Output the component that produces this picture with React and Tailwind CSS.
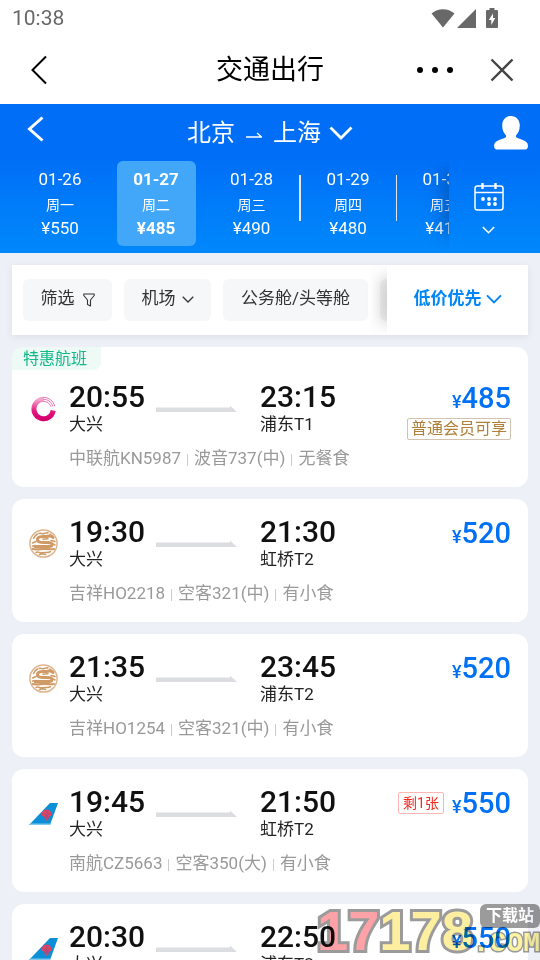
import { useState } from "react";
import clsx from "clsx";

const days = [
  { date: "01-26", week: "周一", price: 550 },
  { date: "01-27", week: "周二", price: 485 },
  { date: "01-28", week: "周三", price: 490, divider: "w-0.5" },
  { date: "01-29", week: "周四", price: 480, divider: "w-px" },
  { date: "01-30", week: "周五", price: 410 },
];

const flights = [
  { id: 1, airline: "united", depart: "20:55", from: "大兴", arrive: "23:15", to: "浦东T1", price: 485, info: ["中联航KN5987", "波音737(中)", "无餐食"], promo: "特惠航班", member: "普通会员可享" },
  { id: 2, airline: "juneyao", depart: "19:30", from: "大兴", arrive: "21:30", to: "虹桥T2", price: 520, info: ["吉祥HO2218", "空客321(中)", "有小食"] },
  { id: 3, airline: "juneyao", depart: "21:35", from: "大兴", arrive: "23:45", to: "浦东T2", price: 520, info: ["吉祥HO1254", "空客321(中)", "有小食"] },
  { id: 4, airline: "southern", depart: "19:45", from: "大兴", arrive: "21:50", to: "虹桥T2", price: 550, info: ["南航CZ5663", "空客350(大)", "有小食"], left: "剩1张" },
  { id: 5, airline: "southern", depart: "20:30", from: "大兴", arrive: "22:50", to: "浦东T2", price: 550, info: ["南航CZ3908", "空客350(大)", "有小食"] },
];

const Chevron = ({ className, strokeWidth = 2 }) => (
  <svg viewBox="0 0 24 14" className={className} fill="none" stroke="currentColor" strokeWidth={strokeWidth}>
    <path d="M1.5 1.5 12 12 22.5 1.5" />
  </svg>
);

const UnitedLogo = () => (
  <svg viewBox="0 0 29 29" className="h-[29px] w-[29px]" fill="none">
    <defs>
      <linearGradient id="united" x1="0" y1="0" x2="0" y2="1">
        <stop offset="0" stopColor="#f3a6cc" />
        <stop offset="0.6" stopColor="#e2187f" />
        <stop offset="1" stopColor="#d6006f" />
      </linearGradient>
    </defs>
    <path d="M24.2 16.500A9.700 9.700 0 1 1 14.500 5.300" stroke="url(#united)" strokeWidth="5" />
    <path d="M14 3.300c5.500 0 10.500 3.500 11.800 9M14 5.200c4.500 0 8.700 2.800 10 7.300M14 7.200c3.500 0 6.800 2 8 5.500" stroke="#ea74ae" strokeWidth="1" />
  </svg>
);

const JuneyaoLogo = () => (
  <svg viewBox="0 0 29 29" className="h-[29px] w-[29px]" fill="none" stroke="#d09a66" strokeLinecap="round">
    <circle cx="14.500" cy="14.500" r="13.600" strokeWidth="1.500" stroke="#dfb58f" />
    <path d="M24 8.500c-2-3-5-1-7.500-1s-7.500-.5-8 2.500 3 3.500 6.500 3.500 8-.5 8 2-3 2-6.500 2H6" strokeWidth="3" />
    <path d="M4 20c4 1.200 8-.2 12-.2s5 1 9 .2" strokeWidth="2.200" />
    <path d="M7 23.500c2-2 4 1.200 6.500.2s5 1 8-1M4.500 9.500c1-2 3-4 4-4.500M10 4.500c2-1 3 1 5 0s2 0 4-.8M22 11.500l4 1M3.500 14l3.500-1.500M21 5l3 3M14 10.300l5-.5M3.500 17l3-.5M10.500 25.500l3-.8 3 .8M23 14.500l3 1.500" strokeWidth="1.500" />
  </svg>
);

const SouthernLogo = () => (
  <svg viewBox="0 0 29 29" className="h-[29px] w-[29px]">
    <path d="M21 4h8l-8 22H0z" fill="#0b8fd6" />
    <path d="M0 26 1.500 24.500H21.600L21 26z" fill="#7fc8ee" />
    <path d="M14.500 10.500l2 1 1-1.200 1 1.200 2-1 .5 2 2.200.7-1.200 3.600-2.200 1.200-.7 3.500h-3l-.7-3.500-2.200-1.200-1.200-3.600 2.200-.7z" fill="#e8415c" />
    <path d="M13.500 14l4.200 3 4.200-3M14.500 18.200h6.500M17.700 12v9" stroke="#8c4f8a" strokeWidth="0.700" fill="none" />
  </svg>
);

const logos = { united: UnitedLogo, juneyao: JuneyaoLogo, southern: SouthernLogo };

const StatusBar = () => (
  <div className="flex h-9 items-center justify-between pl-3 pr-[42px] text-[#686868]">
    <span className="text-[21px] leading-6">10:38</span>
    <div className="flex items-center">
      <svg viewBox="0 0 24 20" className="mr-0.5 h-5 w-6" fill="currentColor">
        <path d="M12 19.500.5 5.500C7-.3 17-.3 23.500 5.500z" />
      </svg>
      <svg viewBox="0 0 19 19" className="mr-2.5 h-[19px] w-[19px]" fill="currentColor">
        <path d="M19 0v19H0z" />
      </svg>
      <svg viewBox="0 0 12 20" className="h-5 w-3" fill="currentColor">
        <path fillRule="evenodd" d="M3.500 0h5v2H11a1 1 0 0 1 1 1v16a1 1 0 0 1-1 1H1a1 1 0 0 1-1-1V3a1 1 0 0 1 1-1h2.500zM7 5.500 2.800 12h2.500v5L9.300 10H7z" />
      </svg>
    </div>
  </div>
);

const AppBar = () => (
  <header className="grid h-[68px] grid-cols-[1fr_auto_1fr] items-center bg-white px-[26px]">
    <button aria-label="返回" className="ml-1 justify-self-start">
      <svg viewBox="0 0 18 30" className="h-[30px] w-[18px]" fill="none" stroke="#000" strokeWidth="2">
        <path d="M16 1.500 2.500 15 16 28.500" />
      </svg>
    </button>
    <h1 className="text-[27px] leading-9 text-black">交通出行</h1>
    <div className="flex items-center gap-[37px] justify-self-end">
      <button aria-label="更多">
        <svg viewBox="0 0 36 6" className="h-1.5 w-9" fill="#000">
          <circle cx="3" cy="3" r="3" />
          <circle cx="18" cy="3" r="3" />
          <circle cx="33" cy="3" r="3" />
        </svg>
      </button>
      <button aria-label="关闭">
        <svg viewBox="0 0 24 24" className="h-6 w-6" fill="none" stroke="#444" strokeWidth="2.400">
          <path d="M1.500 1.500l21 21M22.500 1.500l-21 21" />
        </svg>
      </button>
    </div>
  </header>
);

const RouteHeader = () => (
  <div className="grid h-[57px] grid-cols-[1fr_auto_1fr] items-center px-3 text-white">
    <button aria-label="上一页" className="ml-[15px] justify-self-start pb-2">
      <svg viewBox="0 0 17 26" className="h-[26px] w-[17px]" fill="none" stroke="currentColor" strokeWidth="3">
        <path d="M15.500 1.500 2.500 13l13 11.500" />
      </svg>
    </button>
    <button className="flex items-center text-2xl leading-8">
      <span>北京</span>
      <svg viewBox="0 0 16 6" className="mx-[11px] mt-1 h-1.5 w-4" fill="none" stroke="currentColor" strokeWidth="1.300">
        <path d="M0 5h15.500L11 1" />
      </svg>
      <span>上海</span>
      <Chevron className="ml-2 h-3.5 w-6" strokeWidth={2.8} />
    </button>
    <button aria-label="我的" className="justify-self-end">
      <svg viewBox="0 0 34 34" className="h-[34px] w-[34px]" fill="currentColor">
        <path d="M17 0c5.200 0 8.800 4 8.800 9.500 0 5-2 8-3.800 10v1.500c1 1.500 10 3 11.500 6.500.7 2.300.6 4-.3 5-.6.800-1.200 1-2.200 1H3c-1 0-1.600-.3-2.200-1C0 31.500-.2 29.800.5 27.500 2 24 11 22.500 12 21v-1.500c-1.800-2-3.800-5-3.800-10C8.200 4 11.800 0 17 0z" />
      </svg>
    </button>
  </div>
);

const DateStrip = () => {
  const [selected, setSelected] = useState("01-27");

  return (
    <div className="flex h-[92px] text-white">
      <div className="relative flex min-w-0 flex-1 overflow-hidden pl-3">
        {days.map((day) => (
          <div key={day.date} className="flex w-24 shrink-0">
            <button
              onClick={() => setSelected(day.date)}
              className={clsx(
                "mx-auto flex h-[85px] w-[79px] flex-col items-center rounded-md pt-1.5 text-[17px] leading-6",
                selected === day.date && "bg-[#42a7f9] font-bold"
              )}
            >
              <span>{day.date}</span>
              <span className="pt-0.5 text-sm font-normal leading-6">{day.week}</span>
              <span className="leading-[22px]">¥{day.price}</span>
            </button>
            {day.divider && <span className={clsx("-mr-px mt-3.5 h-[46px] bg-[#e6e6e6]", day.divider)} />}
          </div>
        ))}
        <span className="absolute -right-1 bottom-6 top-4 w-1 shadow-[0_0_16px_6px_rgba(0,60,140,0.5)]" />
      </div>
      <button aria-label="选择日期" className="flex w-[91px] shrink-0 flex-col items-center gap-[15px] pr-3 pt-[22px]">
        <svg viewBox="0 0 30 28" className="h-7 w-[30px]" fill="none" stroke="currentColor" strokeWidth="1.500">
          <rect x="1" y="3" width="28" height="24" rx="2.500" />
          <path d="M1 9.500h28" />
          <path d="M8.500 0v6M21.500 0v6" strokeWidth="2.400" />
          <g fill="currentColor" stroke="none">
            <circle cx="9" cy="16" r="1.900" />
            <circle cx="15" cy="16" r="1.900" />
            <circle cx="21" cy="16" r="1.900" />
            <circle cx="15" cy="21" r="1.900" />
            <circle cx="21" cy="21" r="1.900" />
          </g>
        </svg>
        <Chevron className="h-2 w-[13px]" strokeWidth={3} />
      </button>
    </div>
  );
};

const FilterBar = () => (
  <div className="mx-3 mt-3 flex h-[70px] bg-white text-[17px] leading-6 text-[#333] shadow-[0_2px_8px_rgba(0,0,0,0.07)]">
    <div className="relative flex min-w-0 flex-1 gap-3 overflow-hidden py-3.5 pl-[11px]">
      <button className="flex w-[89px] shrink-0 items-center justify-center gap-2 rounded-md bg-[#f6f7f9] pb-1">
        筛选
        <svg viewBox="0 0 12 14" className="mt-1 h-3.5 w-3" fill="none" stroke="currentColor" strokeWidth="1.100" strokeLinejoin="round">
          <path d="M.8 1h10.400v1.500L7.500 7v6L4.500 11.500V7L.8 2.500z" />
        </svg>
      </button>
      <button className="flex w-[87px] shrink-0 items-center justify-center gap-1.5 rounded-md bg-[#f6f7f9] pb-1">
        机场
        <Chevron className="mt-0.5 h-[7px] w-3" strokeWidth={2.6} />
      </button>
      <button className="w-[145px] shrink-0 rounded-md bg-[#f6f7f9] pb-1">公务舱/头等舱</button>
      <button aria-label="更多筛选" className="w-[90px] shrink-0 rounded-md bg-[#f6f7f9]" />
      <span className="absolute -right-1 bottom-4 top-4 w-1 shadow-[0_0_16px_4px_rgba(0,0,0,0.25)]" />
    </div>
    <button className="flex w-[141px] shrink-0 items-center justify-center gap-1 pb-1 font-bold text-[#0086f6]">
      低价优先
      <Chevron className="mt-0.5 h-2.5 w-4" strokeWidth={3} />
    </button>
  </div>
);

const FlightCard = ({ flight }) => {
  const Logo = logos[flight.airline];

  return (
    <li className="shrink-0 overflow-hidden rounded-xl bg-white">
      {flight.promo && (
        <div className="-mb-1.5 flex">
          <span className="h-[23px] rounded-br-lg bg-[#eefaf6] pl-[11px] pr-3.5 text-base leading-6 text-[#12b886]">
            {flight.promo}
          </span>
        </div>
      )}
      <a href="#" className="flex px-[17px] pb-[17px] pt-4">
        <div className="mr-[11px] mt-3.5 shrink-0">
          <Logo />
        </div>
        <div className="min-w-0 flex-1">
          <div className="flex h-[54px]">
            <div className="w-[87px]">
              <p className="text-3xl font-medium leading-[34px] text-[#111]">{flight.depart}</p>
              <p className="text-[17px] leading-5 text-[#222]">{flight.from}</p>
            </div>
            <svg viewBox="0 0 81 8" className="mr-[23px] mt-6 h-2 w-[81px]" fill="#dcdde0">
              <path d="M0 3.500h74V1.500L81 8H0z" />
            </svg>
            <div>
              <p className="text-3xl font-medium leading-[34px] text-[#111]">{flight.arrive}</p>
              <p className="text-[17px] leading-5 text-[#222]">{flight.to}</p>
            </div>
            <div className="ml-auto flex flex-col items-end gap-0.5">
              <div className="flex items-center gap-2">
                {flight.left && (
                  <span className="rounded-xs border border-[#ffb5b5] px-1 text-sm leading-5 text-[#f5281e]">{flight.left}</span>
                )}
                <p className="text-[29px] font-medium leading-9 text-[#0070f5]">
                  <span className="text-lg leading-5">¥</span>
                  {flight.price}
                </p>
              </div>
              {flight.member && (
                <span className="rounded-xs border border-[#d0c3b0] px-[3px] text-base leading-5 text-[#b08038]">{flight.member}</span>
              )}
            </div>
          </div>
          <p className="mt-3 flex items-center text-[17px] leading-6 text-[#999]">
            {flight.info.map((text, i) => (
              <span key={text} className="flex items-center">
                {i > 0 && <span className="mx-1.5 mt-1 h-3 w-px bg-[#ccc]" />}
                {text}
              </span>
            ))}
          </p>
        </div>
      </a>
    </li>
  );
};

const Watermark = () => (
  <div className="pointer-events-none absolute bottom-0 right-0 flex items-end mix-blend-multiply">
    <p className="font-['Liberation_Sans',sans-serif] text-[56px] font-bold leading-[58px] text-[#fdeea0] [-webkit-text-stroke:6px_#9b9b9b] [paint-order:stroke_fill]">
      <span className="text-[#ffa2a8]">17</span>178
    </p>
    <div className="flex flex-col items-end">
      <span className="rounded-md bg-[#9b9b9b] px-1.5 text-base font-bold leading-6 text-white">下载站</span>
      <span className="font-['Liberation_Mono',monospace] text-[28px] font-bold leading-8 text-[#fdf3a0] [-webkit-text-stroke:3px_#9b9b9b] [paint-order:stroke_fill]">
        .COM
      </span>
    </div>
  </div>
);

const App = () => {
  return (
    <div className="relative flex h-screen flex-col overflow-hidden bg-[#edf0f6] font-[Roboto,'Noto_Sans_CJK_SC',sans-serif]">
      <div className="bg-white">
        <StatusBar />
        <AppBar />
      </div>
      <div className="bg-linear-to-b from-[#006ef7] from-35% to-[#0088fb]">
        <RouteHeader />
        <DateStrip />
      </div>
      <FilterBar />
      <ul className="mx-3 mt-3 flex min-h-0 flex-1 flex-col gap-3 overflow-hidden">
        {flights.map((flight) => (
          <FlightCard key={flight.id} flight={flight} />
        ))}
      </ul>
      <Watermark />
    </div>
  );
};

export default App;
